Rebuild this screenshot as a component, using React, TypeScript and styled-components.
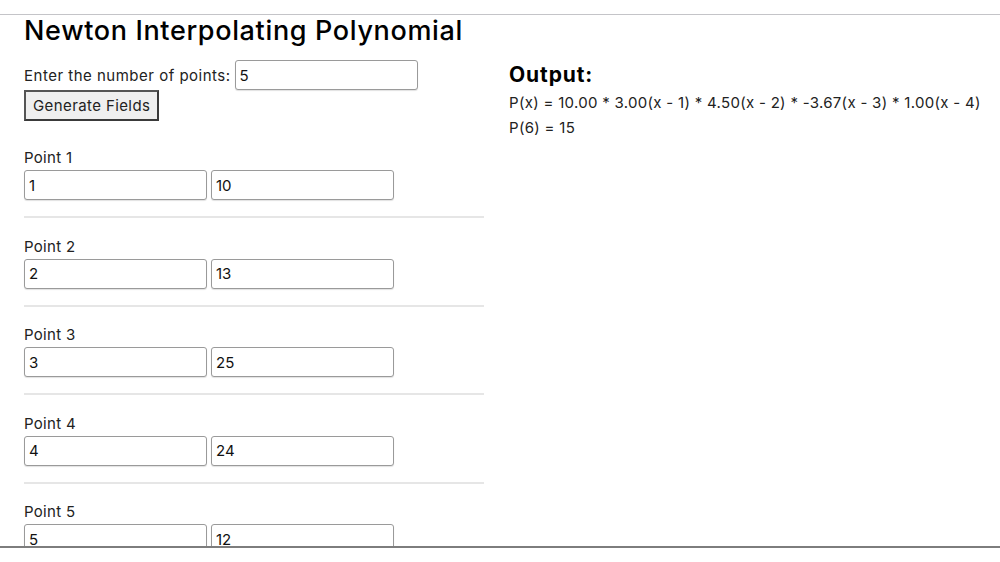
import React from "react";
import styled, { createGlobalStyle } from "styled-components";

const GlobalStyle = createGlobalStyle`
  html, body {
    margin: 0;
    background: #ffffff;
  }
  body {
    font-family: Inter, "Noto Sans", sans-serif;
    color: #222;
  }
`;

const points = [
  { x: "1", y: "10" },
  { x: "2", y: "13" },
  { x: "3", y: "25" },
  { x: "4", y: "24" },
  { x: "5", y: "12" },
];

const Page = styled.div`
  padding-top: 14px;
`;

const Frame = styled.div`
  height: 531px;
  overflow: hidden;
  border-top: 1px solid #c4c4c8;
  border-bottom: 2px solid #7d7d7d;
  padding: 0 24px;
`;

const Title = styled.h1`
  margin: 0;
  font-size: 27px;
  line-height: 32px;
  font-weight: 500;
  color: #000;
  letter-spacing: 0.65px;
`;

const Columns = styled.div`
  display: flex;
  gap: 25px;
  margin-top: 13px;
`;

const InputColumn = styled.div`
  width: 460px;
  flex-shrink: 0;
`;

const CountRow = styled.div`
  display: flex;
  align-items: center;
  gap: 4px;
  font-size: 15px;
  letter-spacing: 0.5px;
`;

const TextInput = styled.input`
  box-sizing: border-box;
  width: 183px;
  height: 30px;
  border: 1px solid #9a9a9a;
  border-radius: 3px;
  box-shadow: 0 1px 1px rgba(0, 0, 0, 0.12);
  padding: 0 4px;
  font-family: Inter, "Noto Sans", sans-serif;
  font-size: 15px;
  color: #111;
  background: #fff;
  outline: none;
`;

const GenerateButton = styled.button`
  box-sizing: border-box;
  height: 31px;
  margin-top: 0;
  padding: 0 7px;
  background: #efefef;
  border: 2px solid #3a3a3a;
  border-top-color: #555;
  border-left-color: #555;
  font-family: Inter, "Noto Sans", sans-serif;
  font-size: 15px;
  letter-spacing: 0.4px;
  color: #222;
`;

const PointList = styled.div`
  margin-top: 27px;
`;

const PointGroup = styled.div`
  padding-bottom: 16px;
  margin-bottom: 18.5px;
  border-bottom: 2px solid #e6e6e6;
`;

const PointLabel = styled.div`
  font-size: 15px;
  line-height: 20px;
  margin-bottom: 2px;
  letter-spacing: 0.3px;
`;

const PointInputs = styled.div`
  display: flex;
  gap: 4px;
`;

const OutputColumn = styled.div`
  padding-top: 1px;
`;

const OutputTitle = styled.h2`
  margin: 0 0 2px;
  font-size: 21px;
  line-height: 27px;
  font-weight: 700;
  letter-spacing: 0.9px;
  color: #000;
`;

const OutputLine = styled.div`
  font-size: 15px;
  line-height: 25px;
  letter-spacing: 0.3px;
  color: #222;
  white-space: nowrap;
`;

export default function App() {
  return (
    <Page>
      <GlobalStyle />
      <Frame>
        <Title>Newton Interpolating Polynomial</Title>
        <Columns>
          <InputColumn>
            <CountRow>
              <span>Enter the number of points:</span>
              <TextInput defaultValue="5" />
            </CountRow>
            <GenerateButton>Generate Fields</GenerateButton>
            <PointList>
              {points.map((p, i) => (
                <PointGroup key={i}>
                  <PointLabel>Point {i + 1}</PointLabel>
                  <PointInputs>
                    <TextInput defaultValue={p.x} />
                    <TextInput defaultValue={p.y} />
                  </PointInputs>
                </PointGroup>
              ))}
            </PointList>
          </InputColumn>
          <OutputColumn>
            <OutputTitle>Output:</OutputTitle>
            <OutputLine>
              P(x) = 10.00 * 3.00(x - 1) * 4.50(x - 2) * -3.67(x - 3) * 1.00(x - 4)
            </OutputLine>
            <OutputLine>P(6) = 15</OutputLine>
          </OutputColumn>
        </Columns>
      </Frame>
    </Page>
  );
}
